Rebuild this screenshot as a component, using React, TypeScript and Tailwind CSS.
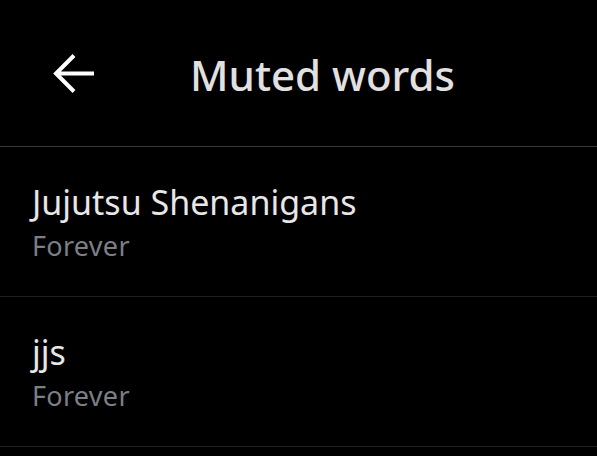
import React from "react";

const items = [
  { word: "Jujutsu Shenanigans", dur: "Forever" },
  { word: "jjs", dur: "Forever" },
];

export default function App() {
  return (
    <div
      className="w-[597px] h-[456px] overflow-hidden bg-black"
      style={{ fontFamily: "'Noto Sans', Roboto, sans-serif" }}
    >
      <div className="h-[147px] border-b border-[#3a3a3e] flex items-center">
        <div className="w-[190px] flex items-center pl-[53px]">
          <svg width="42" height="41" viewBox="0 0 42 41" fill="none">
            <path
              d="M41 20.5H4M21 2.5L3 20.5L21 38.5"
              stroke="#ffffff"
              strokeWidth="4"
            />
          </svg>
        </div>
        <div className="text-[42px] font-medium text-[#e1e1e1] leading-none pt-[4px]">
          Muted words
        </div>
      </div>
      {items.map((it) => (
        <div
          key={it.word}
          className="h-[150px] border-b border-[#1f1f23] pl-[32px] pt-[35px] flex flex-col"
        >
          <div className="text-[34px] leading-[40px] text-[#e7e7e7]">{it.word}</div>
          <div className="text-[27px] leading-[40px] mt-[4px] tracking-[0.3px] text-[#7b7f86]">{it.dur}</div>
        </div>
      ))}
    </div>
  );
}
